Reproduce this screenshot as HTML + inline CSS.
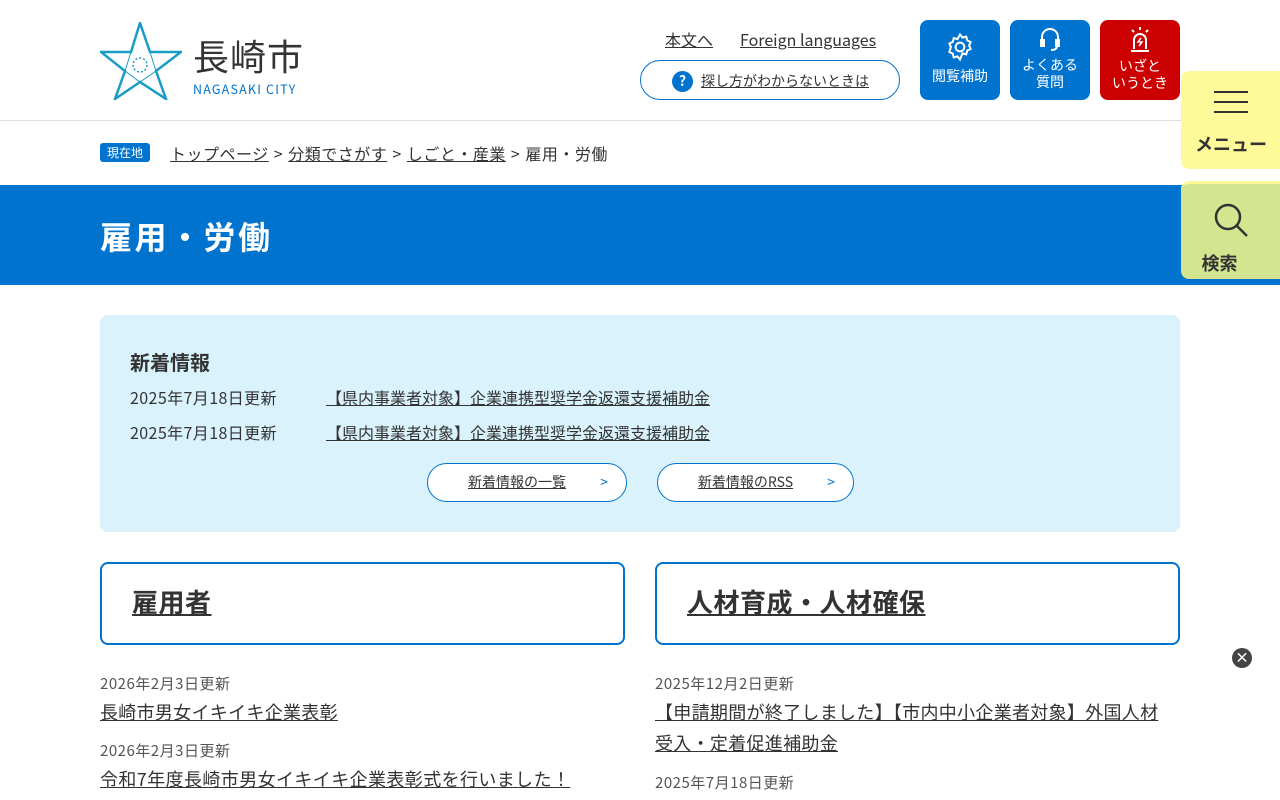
<!DOCTYPE html>
<html lang="ja"><head><meta charset="utf-8"><style>
*{margin:0;padding:0;box-sizing:border-box}
body{width:1280px;height:800px;overflow:hidden;background:#fff;font-family:"Noto Sans CJK JP",sans-serif;color:#333;position:relative}
a{color:#333;text-decoration:underline}
.abs{position:absolute}
.hb{position:absolute;top:20px;width:80px;height:80px;border-radius:8px;background:#0073cf;color:#fff;font-size:14px;line-height:17px;text-align:center}
.side{position:absolute;left:1181px;width:110px;height:98px;border-radius:8px 0 0 8px;text-align:center;font-weight:bold;font-size:18px;color:#333}
.btn{position:absolute;top:463px;height:39px;border:1px solid #0073cf;border-radius:20px;background:#fff;font-size:14px;line-height:37px;text-align:center}
.cat{position:absolute;top:562px;width:525px;height:83px;border:2px solid #0073cf;border-radius:8px;font-size:26px;font-weight:bold;padding:19px 30px;letter-spacing:.5px}
.d{position:absolute;font-size:15px;color:#555}
.l{position:absolute;font-size:18px;text-decoration:underline;line-height:31px}
</style></head><body>
<svg class="abs" style="left:100px;top:22px" width="82" height="78" viewBox="0 0 82 78"><polygon points="40,1 50,30 81,30 56,49 66,77 40,60 15,77 25,49 1,30 31,30" fill="none" stroke="#1a9cc6" stroke-width="2.5"/><polyline points="31,30 25,49 40,60 56,49 50,30" fill="none" stroke="#1a9cc6" stroke-width="1"/><circle cx="40" cy="43" r="7" fill="none" stroke="#1a9cc6" stroke-width="1.5" stroke-dasharray="2 2"/></svg>
<div class="abs" style="left:193px;top:33px;font-size:36px;line-height:44px;color:#333;letter-spacing:1px">長崎市</div>
<div class="abs" style="left:193px;top:79px;font-size:12.5px;color:#0073cf;letter-spacing:1.2px">NAGASAKI CITY</div>
<div class="abs" style="left:665px;top:27px;font-size:16px"><a>本文へ</a></div>
<div class="abs" style="left:740px;top:27px;font-size:16px"><a>Foreign languages</a></div>
<div class="abs" style="left:640px;top:60px;width:260px;height:40px;border:1px solid #0073cf;border-radius:20px;font-size:14px;line-height:38px;padding-left:31px"><span style="display:inline-block;width:21px;height:21px;border-radius:50%;background:#0073cf;color:#fff;text-align:center;line-height:21px;font-weight:bold;font-size:14px;vertical-align:middle;margin-right:8px;text-decoration:none">?</span><a style="vertical-align:middle">探し方がわからないときは</a></div>
<div class="hb" style="left:920px;padding-top:12px"><svg width="30" height="30" viewBox="0 0 24 24" fill="none" stroke="#fff" stroke-width="1.6"><circle cx="12" cy="12" r="3.5"/><path d="M12 2l2 2.5 3-.8.8 3 2.7 1.3-1.2 2.8 1.2 2.8-2.7 1.3-.8 3-3-.8L12 22l-2-2.5-3 .8-.8-3-2.7-1.3L4.7 12 3.5 9.2l2.7-1.3.8-3 3 .8z"/></svg><div style="margin-top:2px">閲覧補助</div></div>
<div class="hb" style="left:1010px;padding-top:7px"><svg width="24" height="26" viewBox="0 0 24 26" fill="none" stroke="#fff" stroke-width="2"><path d="M4 15V10a8 8 0 0116 0v5"/><rect x="3" y="13" width="3" height="6" fill="#fff"/><rect x="18" y="13" width="3" height="6" fill="#fff"/><path d="M19 19q0 4-6 4"/></svg><div>よくある<br>質問</div></div>
<div class="hb" style="left:1100px;background:#cc0000;padding-top:6px"><svg width="28" height="28" viewBox="0 0 28 28" fill="none" stroke="#fff" stroke-width="2"><path d="M14 1v3M6 4l2 2M22 4l-2 2"/><path d="M8 23V14a6 6 0 0112 0v9"/><path d="M5 25h18"/><path d="M15 12l-3 4h4l-3 4" stroke-width="1.5"/></svg><div>いざと<br>いうとき</div></div>
<div class="abs" style="left:0;top:120px;width:1280px;height:1px;background:#ddd"></div>
<div class="abs" style="left:100px;top:143px;width:50px;height:19px;background:#0073cf;color:#fff;font-size:12px;text-align:center;line-height:19px;border-radius:3px">現在地</div>
<div class="abs" style="left:170px;top:141px;font-size:16px;letter-spacing:.5px;word-spacing:1px"><a>トップページ</a> &gt; <a>分類でさがす</a> &gt; <a>しごと・産業</a> &gt; 雇用・労働</div>
<div class="abs" style="left:0;top:185px;width:1280px;height:100px;background:#0073cf"></div>
<div class="abs" style="left:100px;top:213px;font-size:32px;font-weight:bold;color:#fff;letter-spacing:2.5px">雇用・労働</div>
<div class="side" style="top:71px;background:#fffa99"><div style="margin:20px 0 0 33px;width:34px;height:22px;border-top:2px solid #333;border-bottom:2px solid #333;position:relative"><div style="position:absolute;top:8px;left:0;width:34px;height:2px;background:#333"></div></div><div style="margin-top:18px;width:100px">メニュー</div></div>
<div class="side" style="top:181px;background:#d4e590;border-top:3px solid #fffa99"><svg style="margin:17px 0 0 -10px" width="40" height="40" viewBox="0 0 40 40" fill="none" stroke="#333" stroke-width="2.5"><circle cx="17" cy="16" r="12"/><path d="M26 25l10 10"/></svg><div style="margin-top:3px;width:77px">検索</div></div>
<div class="abs" style="left:100px;top:315px;width:1080px;height:217px;background:#d9f2fc;border-radius:8px"></div>
<div class="abs" style="left:130px;top:347px;font-size:20px;font-weight:bold">新着情報</div>
<div class="abs" style="left:130px;top:385px;font-size:16px;letter-spacing:.4px">2025年7月18日更新</div>
<div class="abs" style="left:326px;top:385px;font-size:16px"><a>【県内事業者対象】企業連携型奨学金返還支援補助金</a></div>
<div class="abs" style="left:130px;top:420px;font-size:16px;letter-spacing:.4px">2025年7月18日更新</div>
<div class="abs" style="left:326px;top:420px;font-size:16px"><a>【県内事業者対象】企業連携型奨学金返還支援補助金</a></div>
<div class="btn" style="left:427px;width:200px;padding-right:20px"><a>新着情報の一覧</a><span style="position:absolute;right:18px;color:#0073cf">&gt;</span></div>
<div class="btn" style="left:657px;width:197px;padding-right:20px"><a>新着情報のRSS</a><span style="position:absolute;right:18px;color:#0073cf">&gt;</span></div>
<div class="cat" style="left:100px"><a>雇用者</a></div>
<div class="cat" style="left:655px"><a>人材育成・人材確保</a></div>
<div class="d" style="left:100px;top:673px;letter-spacing:.5px">2026年2月3日更新</div>
<div class="l" style="left:100px;top:697px;letter-spacing:.3px">長崎市男女イキイキ企業表彰</div>
<div class="d" style="left:100px;top:740px;letter-spacing:.5px">2026年2月3日更新</div>
<div class="l" style="left:100px;top:764px;letter-spacing:.4px">令和7年度長崎市男女イキイキ企業表彰式を行いました！</div>
<div class="d" style="left:655px;top:673px;letter-spacing:.5px">2025年12月2日更新</div>
<div class="l" style="left:655px;top:697px;width:520px;letter-spacing:.3px">【申請期間が終了しました】【市内中小企業者対象】外国人材受入・定着促進補助金</div>
<div class="d" style="left:655px;top:772px;letter-spacing:.5px">2025年7月18日更新</div>
<div class="abs" style="left:1232px;top:648px;width:20px;height:20px;border-radius:50%;background:#444;color:#fff;font-size:14px;font-weight:bold;text-align:center;line-height:20px">×</div>
</body></html>
